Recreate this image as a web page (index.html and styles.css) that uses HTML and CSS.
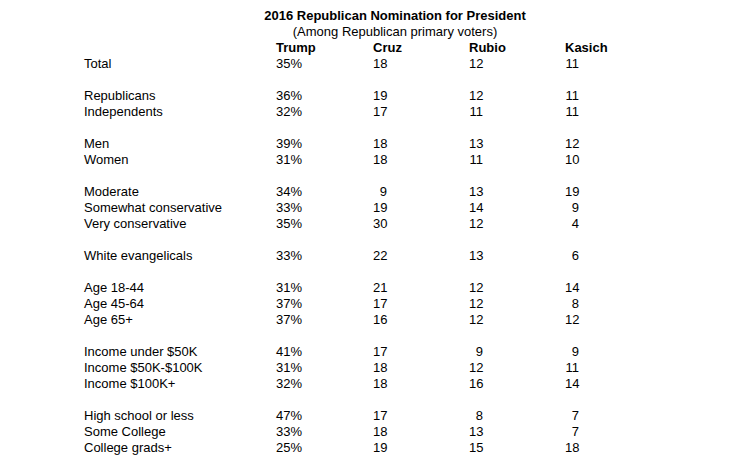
FILE: index.html
```html
<!DOCTYPE html>
<html>
<head>
<meta charset="utf-8">
<link rel="stylesheet" href="styles.css">
</head>
<body>
<div class="sheet">
  <div class="title">2016 Republican Nomination for President</div>
  <div class="subtitle">(Among Republican primary voters)</div>
  <div class="grid">
    <div></div><div class="hd">Trump</div><div class="hd">Cruz</div><div class="hd">Rubio</div><div class="hd">Kasich</div>
    <div>Total</div><div>35%</div><div class="n">18</div><div class="n">12</div><div class="k">11</div>
    <div class="gap"></div>
    <div>Republicans</div><div>36%</div><div class="n">19</div><div class="n">12</div><div class="k">11</div>
    <div>Independents</div><div>32%</div><div class="n">17</div><div class="n">11</div><div class="k">11</div>
    <div class="gap"></div>
    <div>Men</div><div>39%</div><div class="n">18</div><div class="n">13</div><div class="k">12</div>
    <div>Women</div><div>31%</div><div class="n">18</div><div class="n">11</div><div class="k">10</div>
    <div class="gap"></div>
    <div>Moderate</div><div>34%</div><div class="n">9</div><div class="n">13</div><div class="k">19</div>
    <div>Somewhat conservative</div><div>33%</div><div class="n">19</div><div class="n">14</div><div class="k">9</div>
    <div>Very conservative</div><div>35%</div><div class="n">30</div><div class="n">12</div><div class="k">4</div>
    <div class="gap"></div>
    <div>White evangelicals</div><div>33%</div><div class="n">22</div><div class="n">13</div><div class="k">6</div>
    <div class="gap"></div>
    <div>Age 18-44</div><div>31%</div><div class="n">21</div><div class="n">12</div><div class="k">14</div>
    <div>Age 45-64</div><div>37%</div><div class="n">17</div><div class="n">12</div><div class="k">8</div>
    <div>Age 65+</div><div>37%</div><div class="n">16</div><div class="n">12</div><div class="k">12</div>
    <div class="gap"></div>
    <div>Income under $50K</div><div>41%</div><div class="n">17</div><div class="n">9</div><div class="k">9</div>
    <div>Income $50K-$100K</div><div>31%</div><div class="n">18</div><div class="n">12</div><div class="k">11</div>
    <div>Income $100K+</div><div>32%</div><div class="n">18</div><div class="n">16</div><div class="k">14</div>
    <div class="gap"></div>
    <div>High school or less</div><div>47%</div><div class="n">17</div><div class="n">8</div><div class="k">7</div>
    <div>Some College</div><div>33%</div><div class="n">18</div><div class="n">13</div><div class="k">7</div>
    <div>College grads+</div><div>25%</div><div class="n">19</div><div class="n">15</div><div class="k">18</div>
  </div>
</div>
</body>
</html>
```
FILE: styles.css
```css
html, body {
  margin: 0;
  padding: 0;
  background: #ffffff;
}
body {
  font-family: "Liberation Sans", Arial, sans-serif;
  font-size: 13px;
  line-height: 16px;
  color: #000000;
}
.sheet {
  padding: 8px 0 0 84px;
}
.title {
  width: 622px;
  text-align: center;
  font-weight: bold;
}
.subtitle {
  width: 622px;
  text-align: center;
}
.grid {
  display: grid;
  grid-template-columns: 192px 97px 96px 96px 14px;
  grid-auto-rows: 16px;
}
.grid > div {
  white-space: nowrap;
}
.hd {
  font-weight: bold;
}
.n {
  text-align: right;
  padding-right: 82px;
}
.k {
  text-align: right;
}
.gap {
  grid-column: 1 / -1;
}
```
